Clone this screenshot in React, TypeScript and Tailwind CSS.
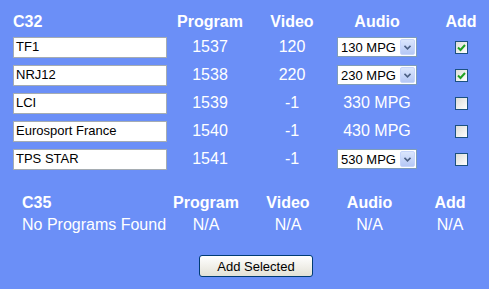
import React from 'react';

const font = { fontFamily: '"Liberation Sans", Arial, sans-serif' };

const rows = [
  { name: 'TF1', program: 1537, video: 120, audio: '130 MPG', select: true, checked: true },
  { name: 'NRJ12', program: 1538, video: 220, audio: '230 MPG', select: true, checked: true },
  { name: 'LCI', program: 1539, video: -1, audio: '330 MPG', select: false, checked: false },
  { name: 'Eurosport France', program: 1540, video: -1, audio: '430 MPG', select: false, checked: false },
  { name: 'TPS STAR', program: 1541, video: -1, audio: '530 MPG', select: true, checked: false },
];

const Check: React.FC<{ checked: boolean }> = ({ checked }) => (
  <div className="w-[13px] h-[13px] border border-[#1c5180] bg-gradient-to-br from-[#dcdcd7] to-white flex items-center justify-center">
    {checked && (
      <svg width="9" height="9" viewBox="0 0 9 9">
        <path d="M1 4.5 L3.5 7 L8 2" fill="none" stroke="#21a121" strokeWidth="2" />
      </svg>
    )}
  </div>
);

const AudioSelect: React.FC<{ value: string }> = ({ value }) => (
  <div className="w-[80px] h-[20px] bg-white border border-[#7f9db9] flex items-center">
    <span className="flex-1 pl-[3px] text-[13px] text-black leading-none">{value}</span>
    <div className="w-[15px] h-[16px] mr-[1px] rounded-[2px] bg-gradient-to-b from-[#dbe6fd] to-[#b5c8f6] border border-[#c6d5fb] flex items-center justify-center">
      <svg width="7" height="5" viewBox="0 0 7 5">
        <path d="M0.5 0.8 L3.5 3.8 L6.5 0.8" fill="none" stroke="#4d6185" strokeWidth="1.6" />
      </svg>
    </div>
  </div>
);

export default function App() {
  return (
    <div className="w-[489px] h-[289px] overflow-hidden bg-[#6b8ff7] text-white pt-[8px]" style={font}>
      <div className="pl-[13px]">
        <div className="grid grid-cols-[156px_82px_82px_88px_80px] h-[27px] items-center text-[16px] font-bold">
          <div>C32</div>
          <div className="text-center">Program</div>
          <div className="text-center">Video</div>
          <div className="text-center">Audio</div>
          <div className="text-center">Add</div>
        </div>
        <div className="flex flex-col gap-[7px]">
          {rows.map((r) => (
            <div key={r.name} className="grid grid-cols-[156px_82px_82px_88px_80px] h-[21px] items-center text-[16px]">
              <div>
                <div className="w-[154px] h-[21px] bg-white border border-[#a5acb2] text-black text-[13px] pl-[2px] flex items-center">
                  {r.name}
                </div>
              </div>
              <div className="text-center">{r.program}</div>
              <div className="text-center">{r.video}</div>
              <div className="flex justify-center">
                {r.select ? <AudioSelect value={r.audio} /> : <span>{r.audio}</span>}
              </div>
              <div className="flex justify-center">
                <Check checked={r.checked} />
              </div>
            </div>
          ))}
        </div>
      </div>

      <div className="pl-[22px] mt-[23px]">
        <div className="grid grid-cols-[143px_82px_82px_81px_80px] h-[22px] items-center text-[16px] font-bold">
          <div>C35</div>
          <div className="text-center">Program</div>
          <div className="text-center">Video</div>
          <div className="text-center">Audio</div>
          <div className="text-center">Add</div>
        </div>
        <div className="grid grid-cols-[143px_82px_82px_81px_80px] h-[21px] items-center text-[16px]">
          <div className="whitespace-nowrap">No Programs Found</div>
          <div className="text-center">N/A</div>
          <div className="text-center">N/A</div>
          <div className="text-center">N/A</div>
          <div className="text-center">N/A</div>
        </div>
      </div>

      <div className="flex justify-center mt-[21px] pl-[23px]">
        <button className="w-[114px] h-[22px] rounded-[3px] border border-[#003c74] bg-gradient-to-b from-white to-[#e3e1d6] text-black text-[13px] leading-none">
          Add Selected
        </button>
      </div>
    </div>
  );
}
